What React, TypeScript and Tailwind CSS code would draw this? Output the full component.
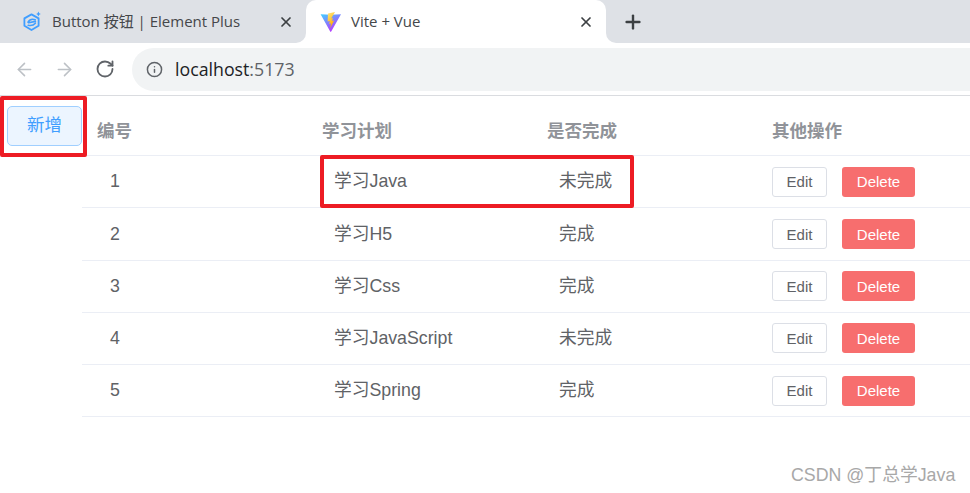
import { RotateCw, ArrowLeft, ArrowRight, Info, X, Plus } from "lucide-react";

const rows = [
  { id: 1, plan: "学习Java", done: "未完成" },
  { id: 2, plan: "学习H5", done: "完成" },
  { id: 3, plan: "学习Css", done: "完成" },
  { id: 4, plan: "学习JavaScript", done: "未完成" },
  { id: 5, plan: "学习Spring", done: "完成" },
];

const cjk = "font-['Liberation_Sans','Noto_Sans_CJK_SC',sans-serif]";
const ui = "font-['Open_Sans','Noto_Sans_CJK_SC',sans-serif]";

function ElementLogo() {
  return (
    <svg width="20" height="21" viewBox="0 0 20 21" fill="none">
      <path d="M9.5 3.4 16.6 7.4V14.8L9.5 19 2.4 14.8V7.4Z" stroke="#409eff" strokeWidth="1.8" strokeLinejoin="round" />
      <path d="M6 11.2C7.6 8.6 10.6 7.8 13.2 8.8M6.2 14.2C8.8 15 11.4 14.4 13.4 12.2M6.6 11.8 13.4 10.4" stroke="#409eff" strokeWidth="1.6" strokeLinecap="round" />
      <path d="M16.4 0.6 17.2 2.2 18.8 3 17.2 3.8 16.4 5.4 15.6 3.8 14.2 3 15.6 2.2Z" fill="#409eff" />
    </svg>
  );
}

function ViteLogo() {
  return (
    <svg width="22" height="22" viewBox="0 0 22 22">
      <defs>
        <linearGradient id="vp" x1="0" y1="0" x2="0.6" y2="1">
          <stop offset="0" stopColor="#41d1ff" />
          <stop offset="1" stopColor="#bd34fe" />
        </linearGradient>
        <linearGradient id="vy" x1="0" y1="0" x2="0.4" y2="1">
          <stop offset="0" stopColor="#ffea83" />
          <stop offset="1" stopColor="#ffa800" />
        </linearGradient>
      </defs>
      <path d="M0.6 3.2 10.6 3.8 21 3.2 11.2 20.6Q10.7 21.4 10.2 20.6Z" fill="url(#vp)" />
      <path d="M15 1 8 2.4 7.6 10.4 9.8 9.9 9.2 13 11 12.6 10.2 17 14.2 9.6 12 10 13 7 11.2 7.4Z" fill="url(#vy)" />
    </svg>
  );
}

function Flare({ side }: { side: "left" | "right" }) {
  return (
    <div className={side === "left" ? "absolute bottom-0 left-[-10px] h-[10px] w-[10px] bg-white" : "absolute bottom-0 right-[-10px] h-[10px] w-[10px] bg-white"}>
      <div className={side === "left" ? "h-full w-full rounded-br-[10px] bg-[#dee1e6]" : "h-full w-full rounded-bl-[10px] bg-[#dee1e6]"} />
    </div>
  );
}

export default function App() {
  return (
    <div className={`relative h-[493px] w-[970px] overflow-hidden bg-white ${cjk}`}>
      {/* Tab strip */}
      <div className={`flex h-[43px] bg-[#dee1e6] pl-[9px] ${ui}`}>
        <div className="flex w-[297px] items-center pl-[13px] pr-[12px] text-[15px] text-[#45474a]">
          <ElementLogo />
          <span className="ml-[10px] flex-1 whitespace-nowrap">Button 按钮 | Element Plus</span>
          <X size={16} strokeWidth={2.6} className="text-[#3c4043]" />
        </div>
        <div className="relative flex w-[300px] items-center rounded-t-[10px] bg-white pl-[14px] pr-[12px] text-[15px] text-[#45474a]">
          <Flare side="left" />
          <ViteLogo />
          <span className="ml-[9px] flex-1 whitespace-nowrap">Vite + Vue</span>
          <X size={16} strokeWidth={2.6} className="text-[#3c4043]" />
          <Flare side="right" />
        </div>
        <div className="ml-[16px] flex items-center">
          <Plus size={22} strokeWidth={2.6} className="text-[#3c4043]" />
        </div>
      </div>

      {/* Toolbar */}
      <div className="flex h-[53px] items-center border-b border-[#dadce0] bg-white pl-[14px]">
        <ArrowLeft size={21} strokeWidth={1.8} className="text-[#bdc1c6]" />
        <ArrowRight size={21} strokeWidth={1.8} className="ml-[19px] text-[#bdc1c6]" />
        <RotateCw size={20} strokeWidth={2.2} className="ml-[20px] text-[#5f6368]" />
        <div className={`ml-[17px] flex h-[43px] flex-1 items-center rounded-l-[22px] bg-[#f1f3f4] pl-[14px] text-[17.75px] ${ui}`}>
          <Info size={17} strokeWidth={2.1} className="text-[#5f6368]" />
          <span className="ml-[12px]">
            <span className="text-[#202124]">localhost</span>
            <span className="text-[#5f6368]">:5173</span>
          </span>
        </div>
      </div>

      {/* Page */}
      <div className="flex">
        <div className="w-[82px] shrink-0 pl-[7px] pt-[10px]">
          <button className="flex h-[40px] w-[75px] items-start justify-center rounded-[5px] border border-[#a0cfff] bg-[#ecf5ff] pt-[5px] text-[17.5px] text-[#409eff]">
            新增
          </button>
        </div>
        <div className="w-[900px] shrink-0 text-[17.75px] text-[#606266]">
          <div className="grid h-[60px] grid-cols-[225px_225px_225px_225px] items-center border-b border-[#ebeef5] pt-[12px] text-[17.5px] font-bold text-[#909399]">
            <div className="pl-[15px]">编号</div>
            <div className="pl-[15px]">学习计划</div>
            <div className="pl-[15px]">是否完成</div>
            <div className="pl-[15px]">其他操作</div>
          </div>
          {rows.map((r) => (
            <div key={r.id} className="grid h-[52.25px] grid-cols-[225px_225px_225px_225px] items-center border-b border-[#ebeef5]">
              <div className="pl-[28px]">{r.id}</div>
              <div className="pl-[27px]">{r.plan}</div>
              <div className="pl-[27px]">{r.done}</div>
              <div className="flex items-center pl-[15px]">
                <button className="h-[30px] w-[55px] rounded-[3px] border border-[#dcdfe6] bg-white pt-[2px] text-[15px] text-[#606266]">Edit</button>
                <button className="ml-[15px] h-[30px] w-[73px] rounded-[3px] bg-[#f76e6e] pt-[2px] text-[15px] text-white">Delete</button>
              </div>
            </div>
          ))}
        </div>
      </div>

      {/* Annotation boxes */}
      <div className="pointer-events-none absolute left-0 top-[96px] h-[61px] w-[87px] rounded-[2px] border-[4px] border-[#ed1c24]" />
      <div className="pointer-events-none absolute left-[320px] top-[155px] h-[53px] w-[314px] rounded-[2px] border-[4px] border-[#ed1c24]" />

      {/* Watermark */}
      <div className="absolute left-[791px] top-[463px] text-[17.8px] leading-[24px] text-[#a8a8a8]">CSDN @丁总学Java</div>
    </div>
  );
}
